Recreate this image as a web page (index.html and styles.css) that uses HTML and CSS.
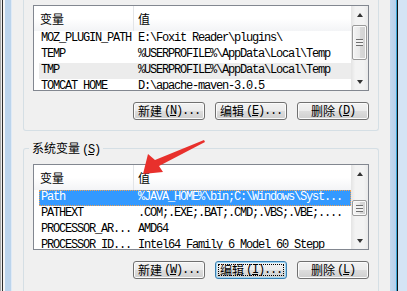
FILE: index.html
```html
<!DOCTYPE html>
<html lang="zh-CN">
  <head>
    <meta charset="UTF-8" />
    <title>环境变量</title>
    <link rel="stylesheet" href="styles.css">
  </head>
  <body>
    <div class="screen">
      <div class="frame-left"></div>
      <div class="dialog">
        <!-- 用户变量 -->
        <div class="group group-user">
          <div class="list">
            <div class="list-body">
              <div class="head"><span class="c1">变量</span><span class="c2">值</span></div>
              <div class="row"><span class="c1">MOZ_PLUGIN_PATH</span><span class="c2">E:\Foxit Reader\plugins\</span></div>
              <div class="row"><span class="c1">TEMP</span><span class="c2">%USERPROFILE%\AppData\Local\Temp</span></div>
              <div class="row row-dim"><span class="c1">TMP</span><span class="c2">%USERPROFILE%\AppData\Local\Temp</span></div>
              <div class="row"><span class="c1">TOMCAT_HOME</span><span class="c2">D:\apache-maven-3.0.5</span></div>
            </div>
            <div class="scrollbar">
              <div class="sb-btn"><i class="up"></i></div>
              <div class="track"><div class="thumb thumb-user"><i class="grip"></i></div></div>
              <div class="sb-btn"><i class="down"></i></div>
            </div>
          </div>
          <div class="buttons">
            <div class="btn">新建<span class="m">(<u>N</u>)...</span></div>
            <div class="btn">编辑<span class="m">(<u>E</u>)...</span></div>
            <div class="btn">删除<span class="m">(<u>D</u>)</span></div>
          </div>
        </div>

        <!-- 系统变量 -->
        <div class="group group-system">
          <div class="group-label">系统变量<span class="m">(<u>S</u>)</span></div>
          <div class="list">
            <div class="list-body">
              <div class="head"><span class="c1">变量</span><span class="c2">值</span></div>
              <div class="row row-sel"><span class="c1">Path</span><span class="c2">%JAVA_HOME%\bin;C:\Windows\Syst...</span></div>
              <div class="row"><span class="c1">PATHEXT</span><span class="c2">.COM;.EXE;.BAT;.CMD;.VBS;.VBE;....</span></div>
              <div class="row"><span class="c1">PROCESSOR_AR...</span><span class="c2">AMD64</span></div>
              <div class="row"><span class="c1">PROCESSOR_ID...</span><span class="c2">Intel64 Family 6 Model 60 Stepp</span></div>
            </div>
            <div class="scrollbar">
              <div class="sb-btn"><i class="up"></i></div>
              <div class="track"><div class="thumb thumb-system"><i class="grip"></i></div></div>
              <div class="sb-btn"><i class="down"></i></div>
            </div>
          </div>
          <div class="buttons">
            <div class="btn">新建<span class="m">(<u>W</u>)...</span></div>
            <div class="btn btn-focus">编辑<span class="m">(<u>I</u>)...</span></div>
            <div class="btn">删除<span class="m">(<u>L</u>)</span></div>
          </div>
        </div>
      </div>
      <div class="frame-right"></div>

      <!-- 红色箭头标注 -->
      <svg class="arrow" width="407" height="291" viewBox="0 0 407 291">
        <polygon points="143,174 148,154 155,160 204,140 205,142 159,166 163,172" fill="#e8302c" />
      </svg>
    </div>
  </body>
</html>
```

FILE: styles.css
```css
* {
  margin: 0;
  padding: 0;
  box-sizing: border-box;
}
body {
  width: 407px;
  height: 291px;
  overflow: hidden;
  background-color: #f0f0f0;
  font: 12px "Noto Sans CJK SC", sans-serif;
  color: #000;
}
.screen {
  position: relative;
  display: flex;
  height: 291px;
}
/* 窗口边框 */
.frame-left {
  width: 12px;
  flex: none;
  background: linear-gradient(to right, #a9a9a9 0 1px, #f0f0f0 1px 2px, #2b2b2b 2px 3px, #f6f6f6 3px 5px, #bcd4ec 5px 11px, #dfeaf6 11px 12px);
}
.frame-right {
  width: 17px;
  flex: none;
  background: linear-gradient(to right, #c3d8ee 0, #b6cfea 6px, #3aa6d6 6px 7px, #111 7px 8px, #d4e4f5 8px 17px);
}
.dialog {
  flex: 1;
  padding: 0 11px;
  overflow: hidden;
}
/* 分组框 */
.group {
  border: 1px solid #d5dfe5;
  padding: 0 9px;
}
.group-user {
  border-top: none;
  border-radius: 0 0 3px 3px;
  padding-top: 5px;
  padding-bottom: 10px;
}
.group-system {
  margin-top: 17px;
  border-bottom: none;
  border-radius: 3px 3px 0 0;
  height: 160px;
}
.group-label {
  width: fit-content;
  margin: -8px 0 0 -4px;
  padding: 0 3px;
  line-height: 14px;
  background-color: #f0f0f0;
}
.group-system .list {
  margin-top: 7px;
}
/* 列表 */
.list {
  display: flex;
  height: 86px;
  border: 1px solid #828790;
  background-color: #fff;
}
.list-body {
  flex: 1;
  overflow: hidden;
}
.head {
  display: flex;
  height: 25px;
  line-height: 25px;
  background: linear-gradient(#fff 0, #fff 50%, #f3f4f6 100%);
}
.head .c1 {
  width: 100px;
  flex: none;
  padding-left: 6px;
  border-right: 1px solid #e3e5e8;
}
.head .c2 {
  padding-left: 4px;
}
.row {
  display: flex;
  height: 16px;
  margin-left: 5px;
  line-height: 16px;
  font: 12px "Liberation Mono", monospace;
  letter-spacing: -1.2px;
  white-space: nowrap;
}
.row .c1 {
  width: 97px;
  flex: none;
  padding-left: 2px;
}
.row .c2 {
  padding-left: 2px;
}
.row-dim {
  background-color: #ececec;
}
.row-sel {
  background-color: #3399ff;
  color: #fff;
  outline: 1px dotted #f0a050;
  outline-offset: -1px;
}
/* 滚动条 */
.scrollbar {
  width: 17px;
  flex: none;
  display: flex;
  flex-direction: column;
  background: linear-gradient(to right, #e4e4e4, #f3f3f3 25%, #f3f3f3 75%, #e9e9e9);
}
.sb-btn {
  height: 17px;
  flex: none;
  display: flex;
  align-items: center;
  justify-content: center;
}
.up {
  border-left: 3px solid transparent;
  border-right: 3px solid transparent;
  border-bottom: 4px solid #333;
}
.down {
  border-left: 3px solid transparent;
  border-right: 3px solid transparent;
  border-top: 4px solid #333;
}
.track {
  flex: 1;
}
.thumb {
  margin: 0 1px;
  border: 1px solid #9a9a9a;
  border-radius: 2px;
  background: linear-gradient(to right, #f4f4f4, #e9e9e9 50%, #d9d9d9 51%, #d2d2d2);
  box-shadow: inset 0 0 0 1px #fafafa;
  display: flex;
  align-items: center;
  justify-content: center;
}
.thumb-user {
  margin-top: 2px;
  height: 35px;
}
.thumb-system {
  margin-top: 18px;
  height: 16px;
}
.grip {
  width: 7px;
  height: 7px;
  background: repeating-linear-gradient(#6f6f6f 0 1px, #f2f2f2 1px 3px);
}
/* 按钮 */
.buttons {
  display: flex;
  justify-content: flex-end;
  gap: 10px;
  margin-top: 11px;
}
.btn {
  width: 72px;
  height: 18px;
  border: 1px solid #707070;
  border-radius: 3px;
  background: linear-gradient(#f2f2f2 0, #ebebeb 50%, #dddddd 50%, #cfcfcf 100%);
  box-shadow: inset 0 0 0 1px #fbfbfb;
  display: flex;
  align-items: center;
  justify-content: center;
  line-height: 14px;
}
.btn-focus {
  border-color: #3c7fb1;
  box-shadow: inset 0 0 0 1px #9fd8f6;
  outline: 1px dotted #000;
  outline-offset: -4px;
}
.m {
  font-family: "Liberation Mono", monospace;
  letter-spacing: -1.2px;
  margin-left: 2px;
}
.arrow {
  position: absolute;
  left: 0;
  top: 0;
  pointer-events: none;
}
```
